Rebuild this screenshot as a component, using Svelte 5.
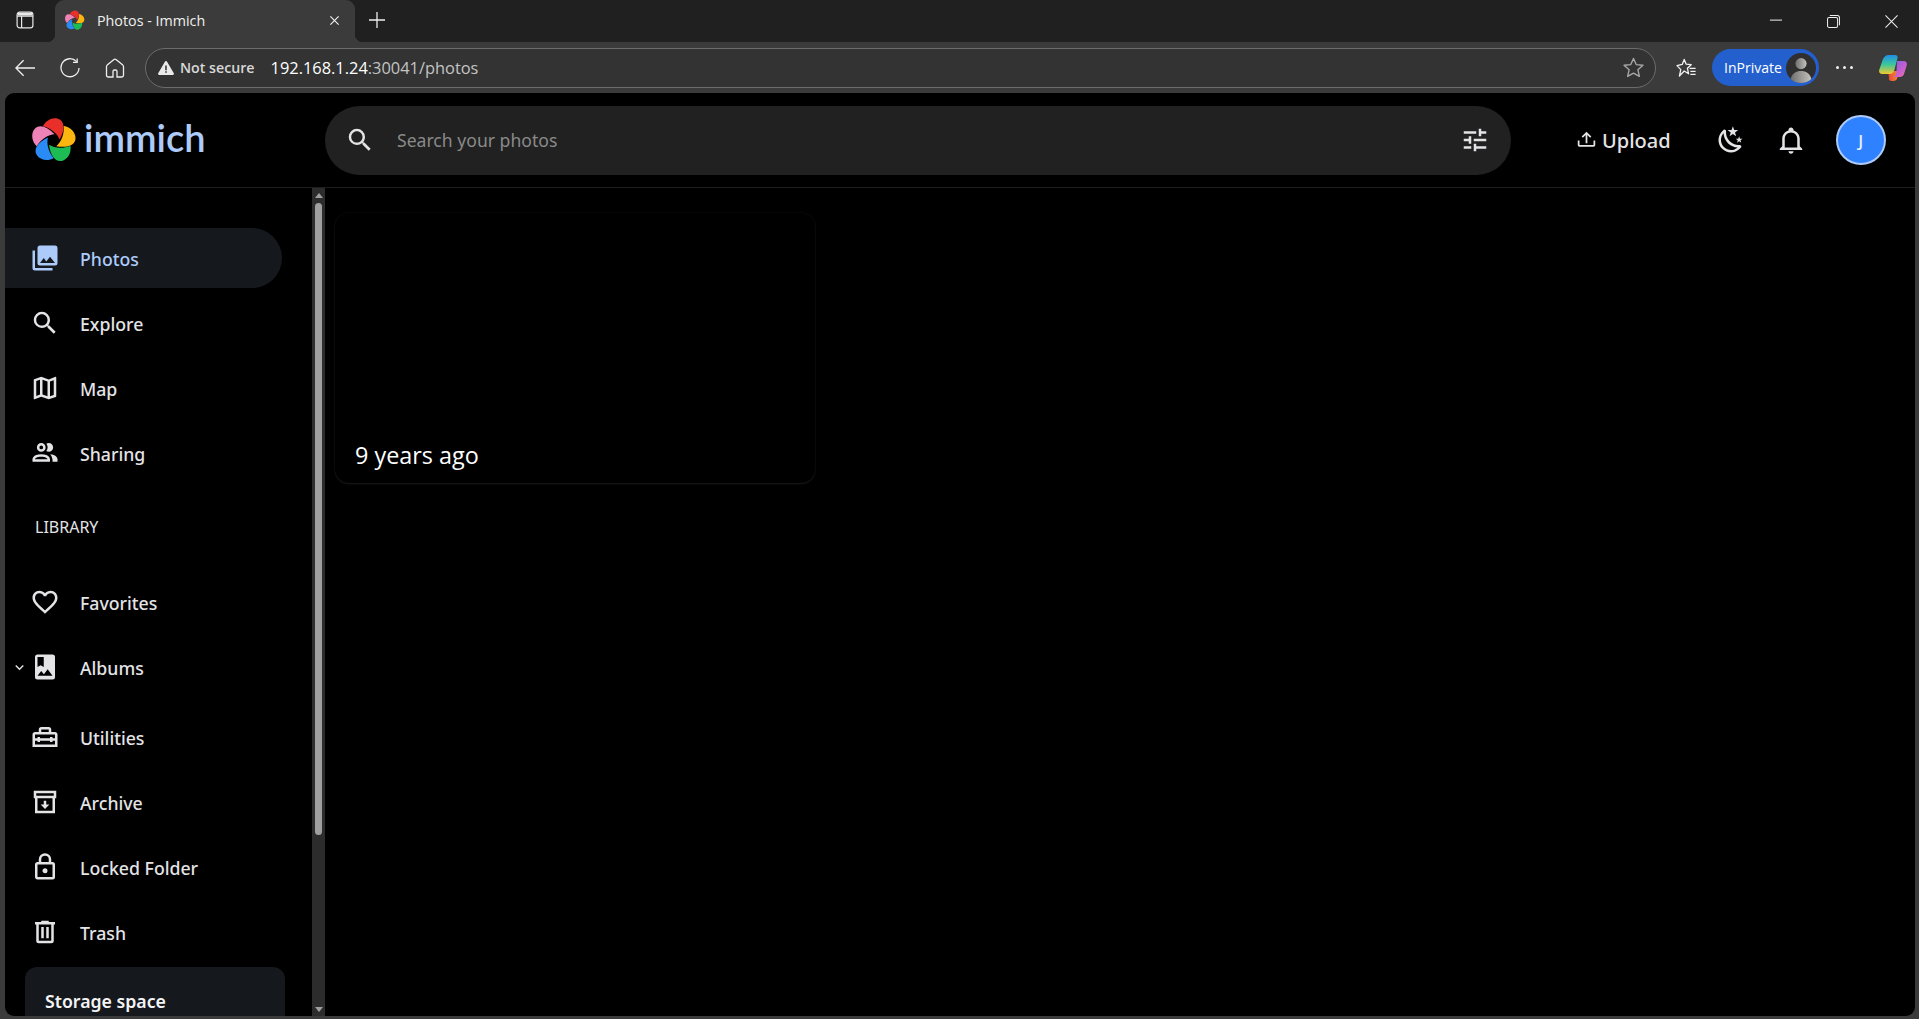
<script lang="ts">
  const petals = [
    { color: "#e92f2a", angle: 0 },
    { color: "#fdb50f", angle: 72 },
    { color: "#1dbb53", angle: 144 },
    { color: "#2a8bf5", angle: 216 },
    { color: "#ee83b8", angle: 288 },
  ];

  const mainNav = [
    { label: "Photos", active: true, d: "M22,16V4A2,2 0 0,0 20,2H8A2,2 0 0,0 6,4V16A2,2 0 0,0 8,18H20A2,2 0 0,0 22,16M11,12L13.03,14.71L16,11L20,16H8M2,6V20A2,2 0 0,0 4,22H18V20H4V6" },
    { label: "Explore", d: "M9.5,3A6.5,6.5 0 0,1 16,9.5C16,11.11 15.41,12.59 14.44,13.73L14.71,14H15.5L20.5,19L19,20.5L14,15.5V14.71L13.73,14.44C12.59,15.41 11.11,16 9.5,16A6.5,6.5 0 0,1 3,9.5A6.5,6.5 0 0,1 9.5,3M9.5,5C7,5 5,7 5,9.5C5,12 7,14 9.5,14C12,14 14,12 14,9.5C14,7 12,5 9.5,5Z" },
    { label: "Map", d: "M20.5,3L20.34,3.03L15,5.1L9,3L3.36,4.9C3.15,4.97 3,5.15 3,5.38V20.5A0.5,0.5 0 0,0 3.5,21L3.66,20.97L9,18.9L15,21L20.64,19.1C20.85,19.03 21,18.85 21,18.62V3.5A0.5,0.5 0 0,0 20.5,3M10,5.47L14,6.87V18.53L10,17.13V5.47M5,6.46L8,5.45V17.15L5,18.31V6.46M19,17.54L16,18.55V6.86L19,5.7V17.54Z" },
    { label: "Sharing", d: "M13.07 10.41A5 5 0 0 0 13.07 4.59A3.39 3.39 0 0 1 15 4A3.5 3.5 0 0 1 15 11A3.39 3.39 0 0 1 13.07 10.41M5.5 7.5A3.5 3.5 0 1 1 9 11A3.5 3.5 0 0 1 5.5 7.5M7.5 7.5A1.5 1.5 0 1 0 9 6A1.5 1.5 0 0 0 7.5 7.5M16 17V19H2V17S2 13 9 13 16 17 16 17M14 17C13.86 16.22 12.67 15 9 15S4.07 16.22 4 17M15.95 13A5.32 5.32 0 0 1 18 17V19H22V17S22 13.37 15.94 13Z" },
  ];

  const libraryNav = [
    { label: "Favorites", d: "M12.1,18.55L12,18.65L11.89,18.55C7.14,14.24 4,11.39 4,8.5C4,6.5 5.5,5 7.5,5C9.04,5 10.54,6 11.07,7.36H12.93C13.46,6 14.96,5 16.5,5C18.5,5 20,6.5 20,8.5C20,11.39 16.86,14.24 12.1,18.55M16.5,3C14.76,3 13.09,3.81 12,5.08C10.91,3.81 9.24,3 7.5,3C4.42,3 2,5.41 2,8.5C2,12.27 5.4,15.36 10.55,20.03L12,21.35L13.45,20.03C18.6,15.36 22,12.27 22,8.5C22,5.41 19.58,3 16.5,3Z" },
    { label: "Albums", chevron: true, d: "M6,19L9,15.14L11.14,17.72L14.14,13.86L18,19H6M6,4H11V12L8.5,10.5L6,12M18,2H6A2,2 0 0,0 4,4V20A2,2 0 0,0 6,22H18A2,2 0 0,0 20,20V4A2,2 0 0,0 18,2Z" },
  ];

  const toolsNav = [
    { label: "Utilities", d: "M20 8H17V6C17 4.9 16.1 4 15 4H9C7.9 4 7 4.9 7 6V8H4C2.9 8 2 8.9 2 10V20H22V10C22 8.9 21.1 8 20 8M9 6H15V8H9V6M20 18H4V15H6V16H8V15H16V16H18V15H20V18M18 13V12H16V13H8V12H6V13H4V10H20V13H18Z" },
    { label: "Archive", d: "M21 3H3V9H4V21H20V9H21V3M19 7H5V5H19V7M18 19H6V9H18V19M13 11H11V14H8.5L12 17.5L15.5 14H13V11Z" },
    { label: "Locked Folder", d: "M12,17C10.89,17 10,16.1 10,15C10,13.89 10.89,13 12,13A2,2 0 0,1 14,15A2,2 0 0,1 12,17M18,20V10H6V20H18M18,8A2,2 0 0,1 20,10V20A2,2 0 0,1 18,22H6C4.89,22 4,21.1 4,20V10C4,8.89 4.89,8 6,8H7V6A5,5 0 0,1 12,1A5,5 0 0,1 17,6V8H18M12,3A3,3 0 0,0 9,6V8H15V6A3,3 0 0,0 12,3Z" },
    { label: "Trash", d: "M9,3V4H4V6H5V19A2,2 0 0,0 7,21H17A2,2 0 0,0 19,19V6H20V4H15V3H9M7,6H17V19H7V6M9,8V17H11V8H9M13,8V17H15V8H13Z" },
  ];

  const magnify = mainNav[1].d;
</script>

{#snippet flower(cls)}
  <svg class={cls} viewBox="-53 -53 106 106">
    {#each petals as p}
      <path
        fill={p.color}
        transform="rotate({p.angle})"
        d="M-24 -32C-17 -46 -2 -53 10 -49C25 -44 27 -26 14 -2C9 -15 -6 -28 -24 -32Z"
      />
    {/each}
  </svg>
{/snippet}

{#snippet navRow(item)}
  <a class="nav-row" class:active={item.active} href="#top">
    {#if item.chevron}
      <svg class="chevron" viewBox="0 0 24 24"><path d="M7.41,8.58L12,13.17L16.59,8.58L18,10L12,16L6,10L7.41,8.58Z" /></svg>
    {/if}
    <svg class="nav-icon" viewBox="0 0 24 24" fill-rule="evenodd"><path d={item.d} /></svg>
    <span class="nav-text">{item.label}</span>
  </a>
{/snippet}

<div class="window">
  <div class="tabstrip">
    <div class="strip-left">
      <svg class="tabs-icon" viewBox="0 0 18 18" fill="none" stroke="#e8e8e8" stroke-width="1.2">
        <rect x="1.1" y="1.1" width="15.8" height="15.8" rx="2.6" />
        <path d="M1.1 5.2H16.9M5.6 5.2V16.9" />
        <path d="M2 3.2H16" stroke-width="2.6" />
      </svg>
    </div>
    <div class="tab">
      {@render flower("favicon")}
      <span class="tab-title">Photos - Immich</span>
      <svg class="tab-close" viewBox="0 0 12 12" stroke="#eee" stroke-width="1.3"><path d="M1.5 1.5L10.5 10.5M10.5 1.5L1.5 10.5" /></svg>
    </div>
    <svg class="new-tab" viewBox="0 0 18 18" stroke="#eee" stroke-width="1.3"><path d="M9 1V17M1 9H17" /></svg>
    <div class="caption">
      <svg class="cap-icon" viewBox="0 0 14 14" stroke="#eee" stroke-width="1.1"><path d="M1 5.5H14" /></svg>
      <svg class="cap-icon" viewBox="0 0 14 14" fill="none" stroke="#eee" stroke-width="1.1"><rect x="0.6" y="2.6" width="10.8" height="10.8" rx="1.6" /><path d="M3 .6H11.2C12.5 .6 13.4 1.5 13.4 2.8V11" /></svg>
      <svg class="cap-icon" viewBox="0 0 14 14" stroke="#eee" stroke-width="1.1"><path d="M.5 .5L13.5 13.5M13.5 .5L.5 13.5" /></svg>
    </div>
  </div>

  <div class="toolbar">
    <svg class="tb-icon back" viewBox="0 0 20 20" fill="none" stroke="#eee" stroke-width="1.3"><path d="M20 10H1M8.6 2.2L.9 10L8.6 17.8" /></svg>
    <svg class="tb-icon refresh" viewBox="0 0 20 20" fill="none" stroke="#eee" stroke-width="1.3"><path d="M16.6 3.6A9 9 0 1 0 19 10" /><path d="M17.2 .4V4.4H13" /></svg>
    <svg class="tb-icon home" viewBox="0 0 20 20" fill="none" stroke="#eee" stroke-width="1.3"><path d="M8 19H3.2C2.2 19 1.5 18.3 1.5 17.3V8.6C1.5 8 1.8 7.5 2.2 7.1L9 1.5C9.6 1 10.4 1 11 1.5L17.8 7.1C18.2 7.5 18.5 8 18.5 8.6V17.3C18.5 18.3 17.8 19 16.8 19H12V13.4C12 12.6 11.4 12 10.6 12H9.4C8.6 12 8 12.6 8 13.4Z" /></svg>

    <div class="address">
      <svg class="warn" viewBox="0 0 16 14"><path fill="#eaeaea" d="M8 0C7.5 0 7.1.3 6.9.7L.2 12.2C-.3 13 .3 14 1.2 14H14.8C15.7 14 16.3 13 15.8 12.2L9.1.7C8.9.3 8.5 0 8 0Z" /><path fill="#3a3a3a" d="M7.2 4.4H8.8V9.2H7.2ZM7.2 10.2H8.8V11.8H7.2Z" /></svg>
      <span class="not-secure">Not secure</span>
      <span class="url">192.168.1.24<span class="url-dim">:30041/photos</span></span>
      <svg class="addr-star" viewBox="0 0 20 20" fill="none" stroke="#a8a8a8" stroke-width="1.3" stroke-linejoin="round"><path d="M10 1.4L12.6 7.2L19 7.9L14.2 12.2L15.6 18.5L10 15.3L4.4 18.5L5.8 12.2L1 7.9L7.4 7.2Z" /></svg>
    </div>

    <svg class="favs" viewBox="0 0 20 20" fill="none" stroke="#f2f2f2" stroke-width="1.3" stroke-linejoin="round"><path d="M8.2 1.4L10.2 6.2L15.2 6.7L11.4 10.2L12.6 15.8L8.2 13L3.4 18L4.8 11.6L1 7.6L6.2 6.4Z" /><path d="M13.6 10.4H19.6M14.4 13.4H19.6M14.4 16.4H19.6" /></svg>

    <div class="inprivate">
      <span>InPrivate</span>
      <span class="pill-avatar">
        <svg viewBox="0 0 30 30">
          <defs>
            <linearGradient id="face" x1="0" y1="0" x2="1" y2="0"><stop offset="0" stop-color="#6f6f6f" /><stop offset="1" stop-color="#c4c2bd" /></linearGradient>
          </defs>
          <circle cx="15" cy="15" r="15" fill="#2f2f2f" />
          <circle cx="15" cy="10.6" r="5.6" fill="url(#face)" />
          <path fill="url(#face)" d="M4.6 26C6 20.6 10 18 15 18S24 20.6 25.4 26C22.6 28.6 19 30 15 30S7.4 28.6 4.6 26Z" />
        </svg>
      </span>
    </div>

    <div class="dots"><i></i><i></i><i></i></div>

    <svg class="copilot" viewBox="0 0 28 26">
      <defs>
        <linearGradient id="co-a" x1="0" y1="0" x2="0" y2="1"><stop offset="0" stop-color="#1f8fe8" /><stop offset=".5" stop-color="#3bc79b" /><stop offset="1" stop-color="#f2c92e" /></linearGradient>
        <linearGradient id="co-b" x1="0" y1="0" x2="1" y2="1"><stop offset="0" stop-color="#7a5ee0" /><stop offset=".6" stop-color="#c95fd0" /><stop offset="1" stop-color="#f5799a" /></linearGradient>
        <linearGradient id="co-c" x1="0" y1="0" x2="1" y2="0"><stop offset="0" stop-color="#e8452f" /><stop offset="1" stop-color="#f4903a" /></linearGradient>
      </defs>
      <path fill="url(#co-c)" d="M9 16H20L18.4 22.6C18 24.6 16.6 26 14.6 26H12.6C10.6 26 9.4 24.4 10 22.4Z" />
      <path fill="url(#co-b)" d="M18 6H25C27 6 28.4 8 27.8 10L25.2 18.6C24.6 20.6 23 22 20.8 22H13.6C15.6 22 16.8 20.6 17.4 18.6Z" />
      <path fill="url(#co-a)" d="M9.8 0H16.2C18.4 0 19 1.6 18.4 3.6L15.2 15.4C14.6 17.4 13 19 11 19H3C.8 19-.4 17 .2 15L3.6 5C4.6 2 6.8 0 9.8 0Z" />
    </svg>
  </div>

  <div class="app">
    <header class="app-header">
      <div class="brand">
        {@render flower("logo")}
        <span class="wordmark">immich</span>
      </div>
      <div class="search">
        <svg class="icon-30 search-glass" viewBox="0 0 24 24"><path d={magnify} /></svg>
        <span class="placeholder">Search your photos</span>
        <svg class="icon-30 tune" viewBox="0 0 24 24"><path d="M3,17V19H9V17H3M3,5V7H13V5H3M13,21V19H21V17H13V15H11V21H13M7,9V11H3V13H7V15H9V9H7M21,13V11H11V13H21M15,9H17V7H21V5H17V3H15V9Z" /></svg>
      </div>
      <div class="actions">
        <div class="upload">
          <svg viewBox="0 0 24 24"><path d="M2 12H4V17H20V12H22V17A2 2 0 0 1 20 19H4A2 2 0 0 1 2 17M12 2L6.46 7.46L7.88 8.88L11 5.75V15H13V5.75L16.13 8.88L17.55 7.45Z" /></svg>
          <span>Upload</span>
        </div>
        <svg class="icon-30 moon" viewBox="0 0 24 24"><path d="M17.75,4.09L15.22,6.03L16.13,9.09L13.5,7.28L10.87,9.09L11.78,6.03L9.25,4.09L12.44,4L13.5,1L14.56,4L17.75,4.09M21.25,11L19.61,12.25L20.2,14.23L18.5,13.06L16.8,14.23L17.39,12.25L15.75,11L17.81,10.95L18.5,9L19.19,10.95L21.25,11M18.97,15.95C19.8,15.87 20.69,17.05 20.16,17.8C19.84,18.25 19.5,18.67 19.08,19.07C15.17,23 8.84,23 4.94,19.07C1.03,15.17 1.03,8.83 4.94,4.93C5.34,4.53 5.76,4.17 6.21,3.85C6.96,3.32 8.14,4.21 8.06,5.04C7.79,7.9 8.75,10.87 10.95,13.06C13.14,15.26 16.1,16.22 18.97,15.95M17.33,17.97C14.5,17.81 11.7,16.64 9.53,14.5C7.36,12.31 6.2,9.5 6.04,6.68C3.23,9.82 3.34,14.64 6.35,17.66C9.37,20.67 14.19,20.78 17.33,17.97Z" /></svg>
        <svg class="icon-30 bell" viewBox="0 0 24 24" fill-rule="evenodd"><path d="M10 21H14C14 22.1 13.1 23 12 23S10 22.1 10 21M21 19V20H3V19L5 17V11C5 7.9 7 5.2 10 4.3V4C10 2.9 10.9 2 12 2S14 2.9 14 4V4.3C17 5.2 19 7.9 19 11V17L21 19M17 11C17 8.2 14.8 6 12 6S7 8.2 7 11V18H17V11Z" /></svg>
        <div class="avatar">J</div>
      </div>
    </header>

    <div class="body">
      <aside class="sidebar">
        <nav class="nav-group first">
          {#each mainNav as item (item.label)}
            {@render navRow(item)}
          {/each}
        </nav>
        <div class="section-label">LIBRARY</div>
        <nav class="nav-group">
          {#each libraryNav as item (item.label)}
            {@render navRow(item)}
          {/each}
        </nav>
        <nav class="nav-group tools">
          {#each toolsNav as item (item.label)}
            {@render navRow(item)}
          {/each}
        </nav>
        <div class="storage">Storage space</div>
      </aside>

      <div class="scrollbar">
        <span class="arrow up"></span>
        <span class="thumb"></span>
        <span class="arrow down"></span>
      </div>

      <main class="content">
        <section class="memory">
          <span class="memory-label">9 years ago</span>
        </section>
      </main>
    </div>
  </div>
</div>

<style>
  :global(body) {
    margin: 0;
    background: #3b3b3b;
    overflow: hidden;
  }

  .window {
    width: 1919px;
    height: 1019px;
    display: flex;
    flex-direction: column;
    font-family: "Open Sans", "Noto Sans", sans-serif;
    color: #fff;
  }

  /* Browser chrome */
  .tabstrip {
    height: 42px;
    flex: none;
    display: flex;
    align-items: center;
    background: #202020;
  }
  .strip-left {
    width: 55px;
    height: 100%;
    display: flex;
    align-items: center;
    padding: 0 0 2px 16px;
    box-sizing: border-box;
  }
  .tabs-icon { width: 18px; height: 18px; }
  .tab {
    width: 300px;
    height: 100%;
    background: #3b3b3b;
    border-radius: 9px 9px 0 0;
    display: flex;
    align-items: center;
    padding: 0 0 2px 9px;
    box-sizing: border-box;
    position: relative;
  }
  .tab::before, .tab::after {
    content: "";
    position: absolute;
    bottom: 0;
    width: 8px;
    height: 8px;
  }
  .tab::before {
    left: -8px;
    background: radial-gradient(circle at 0 0, transparent 8px, #3b3b3b 8.5px);
  }
  .tab::after {
    right: -8px;
    background: radial-gradient(circle at 100% 0, transparent 8px, #3b3b3b 8.5px);
  }
  :global(.favicon) { width: 21px; height: 21px; }
  .tab-title {
    margin-left: 12px;
    font-size: 14.3px;
    color: #f0f0f0;
    flex: 1;
  }
  .tab-close { width: 11px; height: 11px; margin-right: 15px; }
  .new-tab { width: 18px; height: 18px; margin: 0 0 2px 13px; }
  .caption {
    margin-left: auto;
    display: flex;
    gap: 45px;
    padding-right: 21px;
  }
  .cap-icon { width: 13px; height: 13px; }

  .toolbar {
    height: 51px;
    flex: none;
    display: flex;
    align-items: center;
    background: #3b3b3b;
  }
  .tb-icon { width: 20px; height: 20px; flex: none; }
  .back { margin-left: 15px; }
  .refresh { margin-left: 25px; }
  .home { margin-left: 25px; }
  .address {
    margin-left: 20px;
    width: 1511px;
    height: 40px;
    box-sizing: border-box;
    border: 1px solid #6c6c6c;
    border-radius: 20px;
    background: #333;
    display: flex;
    align-items: center;
    padding-left: 12px;
    flex: none;
  }
  .warn { width: 16px; height: 14px; }
  .not-secure {
    margin-left: 6px;
    font-size: 14.2px;
    font-weight: 600;
    color: #d8d8d8;
  }
  .url {
    margin-left: 16px;
    font-size: 16.4px;
    color: #fff;
  }
  .url-dim { color: #c4c4c4; }
  .addr-star {
    margin-left: auto;
    margin-right: 11px;
    width: 21px;
    height: 21px;
  }
  .favs { margin-left: 20px; width: 20px; height: 20px; flex: none; }
  .inprivate {
    margin-left: 16px;
    width: 107px;
    height: 37px;
    border-radius: 19px;
    background: #2360ce;
    display: flex;
    align-items: center;
    justify-content: space-between;
    padding: 0 3px 0 12px;
    box-sizing: border-box;
    font-size: 14px;
    font-weight: 500;
    flex: none;
  }
  .pill-avatar { width: 30px; height: 30px; display: block; }
  .pill-avatar svg { width: 30px; height: 30px; display: block; }
  .dots {
    margin-left: 17px;
    display: flex;
    gap: 4px;
  }
  .dots i { width: 3px; height: 3px; border-radius: 50%; background: #eee; }
  .copilot { margin-left: 26px; width: 28px; height: 26px; flex: none; }

  /* Immich */
  .app {
    flex: 1;
    min-height: 0;
    margin: 0 4px 3px 5px;
    background: #000;
    border-radius: 9px;
    overflow: hidden;
    display: flex;
    flex-direction: column;
    font-family: "Noto Sans", "Open Sans", sans-serif;
  }
  .app-header {
    height: 95px;
    flex: none;
    box-sizing: border-box;
    border-bottom: 1px solid #1d1d1d;
    display: flex;
    align-items: center;
  }
  .brand {
    width: 320px;
    flex: none;
    display: flex;
    align-items: center;
    padding-left: 25px;
    box-sizing: border-box;
  }
  :global(.logo) { width: 47px; height: 47px; }
  .wordmark {
    margin: -6px 0 0 7px;
    font-family: "Lato", sans-serif;
    font-size: 38px;
    font-weight: 600;
    line-height: 1;
    color: #adcbfa;
  }
  .search {
    width: 1186px;
    height: 69px;
    flex: none;
    border-radius: 35px;
    background: #212121;
    display: flex;
    align-items: center;
    padding: 0 21px 0 20px;
    box-sizing: border-box;
  }
  .icon-30 { width: 30px; height: 30px; flex: none; fill: #e4e4e7; }
  .placeholder {
    margin-left: 22px;
    font-size: 17.6px;
    color: #8a8a8a;
  }
  .tune { margin-left: auto; }
  .actions {
    flex: 1;
    display: flex;
    align-items: center;
    padding-left: 65px;
  }
  .upload {
    display: flex;
    align-items: center;
    gap: 5px;
    font-size: 20px;
    font-weight: 500;
    color: #e4e4e7;
  }
  .upload svg { width: 21px; height: 21px; fill: #e4e4e7; }
  .moon { margin-left: 45px; }
  .bell { margin-left: 30px; }
  .avatar {
    margin-left: 30px;
    width: 50px;
    height: 50px;
    box-sizing: border-box;
    border: 2px solid #adcbfa;
    border-radius: 50%;
    background: #2f82ff;
    color: #e8f0ff;
    display: flex;
    align-items: center;
    justify-content: center;
    font-size: 17px;
    font-weight: 500;
  }

  .body {
    flex: 1;
    min-height: 0;
    display: flex;
  }
  .sidebar {
    width: 307px;
    flex: none;
    overflow: hidden;
  }
  .nav-group {
    display: flex;
    flex-direction: column;
    gap: 5px;
  }
  .nav-group.first { padding-top: 40px; }
  .nav-group.tools { padding-top: 10px; }
  .nav-row {
    position: relative;
    height: 60px;
    width: 277px;
    flex: none;
    display: flex;
    align-items: center;
    gap: 20px;
    padding-left: 25px;
    box-sizing: border-box;
    border-radius: 0 30px 30px 0;
    color: #e4e4e7;
    font-size: 17.7px;
    font-weight: 500;
    text-decoration: none;
  }
  .nav-text { padding-top: 1px; }
  .nav-row.active {
    background: #15181d;
    color: #adcbfa;
  }
  .nav-icon { width: 30px; height: 30px; fill: currentColor; flex: none; }
  .chevron {
    position: absolute;
    left: 6px;
    top: 22px;
    width: 17px;
    height: 17px;
    fill: #e4e4e7;
  }
  .section-label {
    height: 89px;
    box-sizing: border-box;
    padding: 34px 0 0 30px;
    font-size: 16px;
    line-height: 20px;
    color: #e4e4e7;
  }
  .storage {
    margin: 5px 0 0 20px;
    width: 260px;
    height: 120px;
    box-sizing: border-box;
    padding: 22px 20px;
    background: #15181d;
    border-radius: 12px;
    font-size: 17.7px;
    line-height: 24px;
    font-weight: 600;
    color: #f4f4f5;
  }

  .scrollbar {
    width: 13px;
    flex: none;
    background: #2c2c2c;
    display: flex;
    flex-direction: column;
    align-items: center;
  }
  .arrow {
    width: 0;
    height: 0;
    border-left: 4px solid transparent;
    border-right: 4px solid transparent;
    flex: none;
  }
  .arrow.up { margin-top: 5px; border-bottom: 5px solid #9f9f9f; }
  .arrow.down { margin: auto 0 4px; border-top: 5px solid #9f9f9f; }
  .thumb {
    margin-top: 5px;
    width: 7px;
    height: 632px;
    border-radius: 4px;
    background: #9f9f9f;
  }

  .content {
    flex: 1;
    padding: 25px 0 0 10px;
  }
  .memory {
    width: 480px;
    height: 270px;
    box-sizing: border-box;
    border-radius: 14px;
    box-shadow: 0 0 2px rgba(255, 255, 255, 0.08), 0 1px 2px rgba(255, 255, 255, 0.09);
    display: flex;
    align-items: flex-end;
    padding: 0 0 12px 20px;
  }
  .memory-label {
    font-family: "Open Sans", sans-serif;
    font-size: 23.4px;
    line-height: 32px;
    color: #fff;
  }
</style>
